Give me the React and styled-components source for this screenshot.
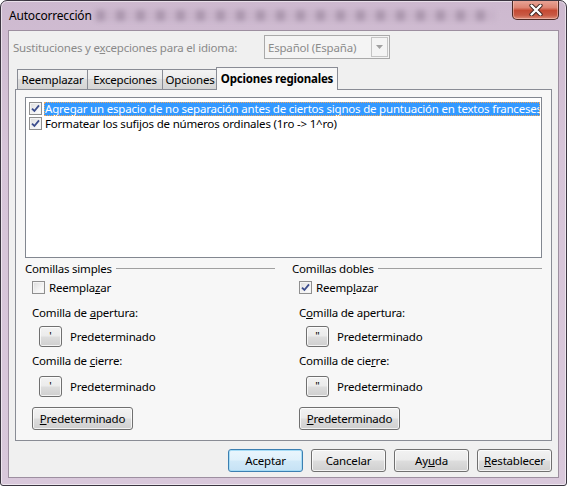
import React from 'react';
import styled, { createGlobalStyle, css } from 'styled-components';

const GlobalStyle = createGlobalStyle`
  html, body {
    margin: 0;
    padding: 0;
    background: #ffffff;
  }
  body {
    font-family: "Noto Sans", "Open Sans", sans-serif;
    font-size: 11.5px;
    letter-spacing: -0.2px;
    color: #000;
  }
`;

const Window = styled.div`
  width: 567px;
  height: 486px;
  box-sizing: border-box;
  display: flex;
  flex-direction: column;
  border: 1px solid #3b3540;
  border-radius: 7px 7px 3px 3px;
  background: linear-gradient(180deg, #cdb9cf 0%, #d6c4d8 30%, #d9c8db 100%);
  box-shadow: inset 0 0 0 1px rgba(255, 255, 255, 0.55);
  overflow: hidden;
`;

const TitleBar = styled.div`
  position: relative;
  height: 29px;
  flex: none;
  display: flex;
  align-items: flex-start;
  justify-content: space-between;

  &::before {
    content: '';
    position: absolute;
    left: 95px;
    right: 70px;
    top: 9px;
    height: 11px;
    background: repeating-linear-gradient(
      90deg,
      #a692a9 0 9px,
      #c7b3c9 9px 20px
    );
    filter: blur(2.5px);
    opacity: 0.85;
  }
`;

const Title = styled.span`
  position: relative;
  margin: 6px 0 0 8px;
  font-size: 12px;
  color: #000;
`;

const CloseButton = styled.div`
  position: relative;
  width: 45px;
  height: 19px;
  margin: -1px 7px 0 0;
  border: 1px solid #4e2b26;
  border-top: none;
  border-radius: 0 0 5px 5px;
  background: linear-gradient(
    180deg,
    #e9a89b 0%,
    #dd8472 40%,
    #c54a33 55%,
    #c85a44 80%,
    #dd8e7a 100%
  );
  box-shadow: inset 0 0 0 1px rgba(255, 220, 210, 0.45);
  display: flex;
  align-items: center;
  justify-content: center;
`;

const Client = styled.div`
  flex: 1;
  margin: 0 7px 7px 7px;
  border: 1px solid #9d8fa0;
  background: #f0f0f0;
  display: flex;
  flex-direction: column;
  min-height: 0;
`;

const LangRow = styled.div`
  display: flex;
  align-items: center;
  padding: 4px 0 0 4px;
  height: 24px;
`;

const DimLabel = styled.span`
  width: 251px;
  color: #8a8a8a;
`;

const Combo = styled.div`
  width: 121px;
  height: 22px;
  border: 1px solid #a9a9a9;
  background: #f4f4f4;
  display: flex;
  align-items: center;
  justify-content: space-between;
  color: #8b8b8b;
  padding-left: 3px;
`;

const ComboArrow = styled.div`
  width: 15px;
  height: 18px;
  margin-right: 1px;
  border: 1px solid #c4c4c4;
  background: #f4f4f4;
  display: flex;
  align-items: center;
  justify-content: center;
`;

const TabStrip = styled.div`
  display: flex;
  align-items: flex-end;
  height: 22px;
  margin: 8px 6px 0 6px;
  padding-left: 2px;
  position: relative;
  z-index: 1;
`;

const Tab = styled.div`
  box-sizing: border-box;
  height: 20px;
  width: ${(p) => p.$w}px;
  border: 1px solid #898c95;
  border-bottom: none;
  margin-left: -1px;
  background: linear-gradient(180deg, #f3f3f3 0%, #ebebeb 50%, #dedede 50%, #d5d5d5 100%);
  display: flex;
  align-items: center;
  justify-content: center;
  white-space: nowrap;
  padding-bottom: 1px;

  &:first-child {
    margin-left: 0;
  }

  ${(p) =>
    p.$active &&
    css`
      height: 23px;
      margin: 0 -2px -1px -2px;
      background: #f7f7f7;
      font-weight: 700;
      padding-bottom: 2px;
      position: relative;
    `}
`;

const Panel = styled.div`
  flex: 1;
  margin: 0 6px 0 6px;
  border: 1px solid #898c95;
  background: #f7f7f7;
  display: flex;
  flex-direction: column;
`;

const ListBox = styled.div`
  height: 156px;
  margin: 7px 9px 0 9px;
  border: 1px solid #828790;
  background: #fff;
  padding: 3px 1px 0 3px;
  display: flex;
  flex-direction: column;
`;

const ListRow = styled.div`
  display: flex;
  align-items: center;
  height: 15px;
`;

const ListText = styled.span`
  flex: 1;
  min-width: 0;
  margin-left: 2px;
  padding: 0 1px;
  height: 14px;
  line-height: 13px;
  white-space: nowrap;
  overflow: hidden;
  box-sizing: border-box;
  ${(p) =>
    p.$selected &&
    css`
      background: #3399ff;
      color: #fff;
      outline: 1px dotted #f2a65a;
      outline-offset: -1px;
    `}
`;

const Box = styled.span`
  box-sizing: border-box;
  width: 13px;
  height: 13px;
  flex: none;
  border: 1px solid #8f8f8f;
  background: linear-gradient(135deg, #dcdcdc 0%, #f4f4f4 60%, #ffffff 100%);
  box-shadow: inset 0 0 0 1px #f4f4f4;
  display: inline-flex;
  align-items: center;
  justify-content: center;
`;

const Groups = styled.div`
  display: grid;
  grid-template-columns: 250px 250px;
  column-gap: 17px;
  margin: 2px 9px 0 9px;
`;

const Group = styled.div`
  display: flex;
  flex-direction: column;
`;

const GroupHead = styled.div`
  display: flex;
  align-items: center;
  height: 16px;
  gap: 4px;

  &::after {
    content: '';
    flex: 1;
    height: 1px;
    background: #a0a0a0;
    margin-top: 1px;
  }
`;

const CheckRow = styled.label`
  display: flex;
  align-items: center;
  gap: 4px;
  height: 16px;
  margin: 3px 0 0 ${(p) => p.$indent}px;
`;

const FieldLabel = styled.div`
  height: 16px;
  line-height: 16px;
  margin: ${(p) => p.$top}px 0 0 ${(p) => p.$indent}px;
`;

const QuoteRow = styled.div`
  display: flex;
  align-items: center;
  gap: 8px;
  margin: ${(p) => p.$top}px 0 0 14px;
`;

const buttonFace = css`
  box-sizing: border-box;
  border: 1px solid #707070;
  border-radius: 3px;
  background: linear-gradient(180deg, #f2f2f2 0%, #ebebeb 48%, #dddddd 52%, #cfcfcf 100%);
  box-shadow: inset 0 0 0 1px rgba(255, 255, 255, 0.75);
  display: flex;
  align-items: center;
  justify-content: center;
  font-family: inherit;
  font-size: 11.5px;
  letter-spacing: -0.2px;
  color: #000;
  padding: 0;
`;

const QuoteButton = styled.div`
  ${buttonFace}
  width: 23px;
  height: 21px;
  font-size: 11px;
  line-height: 1;
  padding-bottom: 3px;
`;

const Button = styled.button`
  ${buttonFace}
  width: ${(p) => p.$w || 75}px;
  height: 23px;
  padding-bottom: 1px;
  ${(p) =>
    p.$default &&
    css`
      border-color: #3c7fb1;
      box-shadow: inset 0 0 0 1px #a6dcf6;
      background: linear-gradient(180deg, #eaf6fd 0%, #e0f1fb 48%, #d1e9f8 52%, #c6e2f5 100%);
    `}
`;

const GroupButton = styled(Button)`
  margin: 10px 0 0 7px;
`;

const ButtonRow = styled.div`
  display: flex;
  justify-content: flex-end;
  gap: 8px;
  padding: 8px 6px 5px 0;
`;

const Check = ({ checked }) => (
  <Box>
    {checked && (
      <svg width="9" height="9" viewBox="0 0 9 9">
        <path d="M1 4.6 L3.4 7 L8 1.4" fill="none" stroke="#3c4d8d" strokeWidth="1.8" />
      </svg>
    )}
  </Box>
);

const QuoteGroup = ({ title, checked, replaceLabel, openLabel, closeLabel, glyph }) => (
  <Group>
    <GroupHead>{title}</GroupHead>
    <CheckRow $indent={7}>
      <Check checked={checked} />
      <span>{replaceLabel}</span>
    </CheckRow>
    <FieldLabel $top={10} $indent={7}>{openLabel}</FieldLabel>
    <QuoteRow $top={5}>
      <QuoteButton>{glyph}</QuoteButton>
      <span>Predeterminado</span>
    </QuoteRow>
    <FieldLabel $top={6} $indent={7}>{closeLabel}</FieldLabel>
    <QuoteRow $top={7}>
      <QuoteButton>{glyph}</QuoteButton>
      <span>Predeterminado</span>
    </QuoteRow>
    <GroupButton $w={101}>
      <u>P</u>redeterminado
    </GroupButton>
  </Group>
);

export default function App() {
  return (
    <>
      <GlobalStyle />
      <Window>
        <TitleBar>
          <Title>Autocorrección</Title>
          <CloseButton>
            <svg width="16" height="12" viewBox="0 0 16 12">
              <path d="M3.5 1.5 L12.5 10.5 M12.5 1.5 L3.5 10.5" stroke="#3d2420" strokeWidth="4.2" strokeLinecap="round" />
              <path d="M3.5 1.5 L12.5 10.5 M12.5 1.5 L3.5 10.5" stroke="#ffffff" strokeWidth="2.4" strokeLinecap="round" />
            </svg>
          </CloseButton>
        </TitleBar>
        <Client>
          <LangRow>
            <DimLabel>
              Sustituciones y e<u>x</u>cepciones para el idioma:
            </DimLabel>
            <Combo>
              <span>Español (España)</span>
              <ComboArrow>
                <svg width="7" height="4" viewBox="0 0 7 4">
                  <path d="M0 0 H7 L3.5 4 Z" fill="#a0a0a0" />
                </svg>
              </ComboArrow>
            </Combo>
          </LangRow>
          <TabStrip>
            <Tab $w={71}>Reemplazar</Tab>
            <Tab $w={76}>Excepciones</Tab>
            <Tab $w={56}>Opciones</Tab>
            <Tab $w={122} $active>Opciones regionales</Tab>
          </TabStrip>
          <Panel>
            <ListBox>
              <ListRow>
                <Check checked />
                <ListText $selected>
                  Agregar un espacio de no separación antes de ciertos signos de puntuación en textos franceses
                </ListText>
              </ListRow>
              <ListRow>
                <Check checked />
                <ListText>Formatear los sufijos de números ordinales (1ro -&gt; 1^ro)</ListText>
              </ListRow>
            </ListBox>
            <Groups>
              <QuoteGroup
                title="Comillas simples"
                replaceLabel={<>Reempla<u>z</u>ar</>}
                openLabel={<>Comilla de <u>a</u>pertura:</>}
                closeLabel={<>Comilla de <u>c</u>ierre:</>}
                glyph="'"
              />
              <QuoteGroup
                title="Comillas dobles"
                checked
                replaceLabel={<>Reemp<u>l</u>azar</>}
                openLabel={<>C<u>o</u>milla de apertura:</>}
                closeLabel={<>Comilla de cie<u>r</u>re:</>}
                glyph={'"'}
              />
            </Groups>
          </Panel>
          <ButtonRow>
            <Button $default>Aceptar</Button>
            <Button>Cancelar</Button>
            <Button>
              Ay<u>u</u>da
            </Button>
            <Button>
              <u>R</u>establecer
            </Button>
          </ButtonRow>
        </Client>
      </Window>
    </>
  );
}
